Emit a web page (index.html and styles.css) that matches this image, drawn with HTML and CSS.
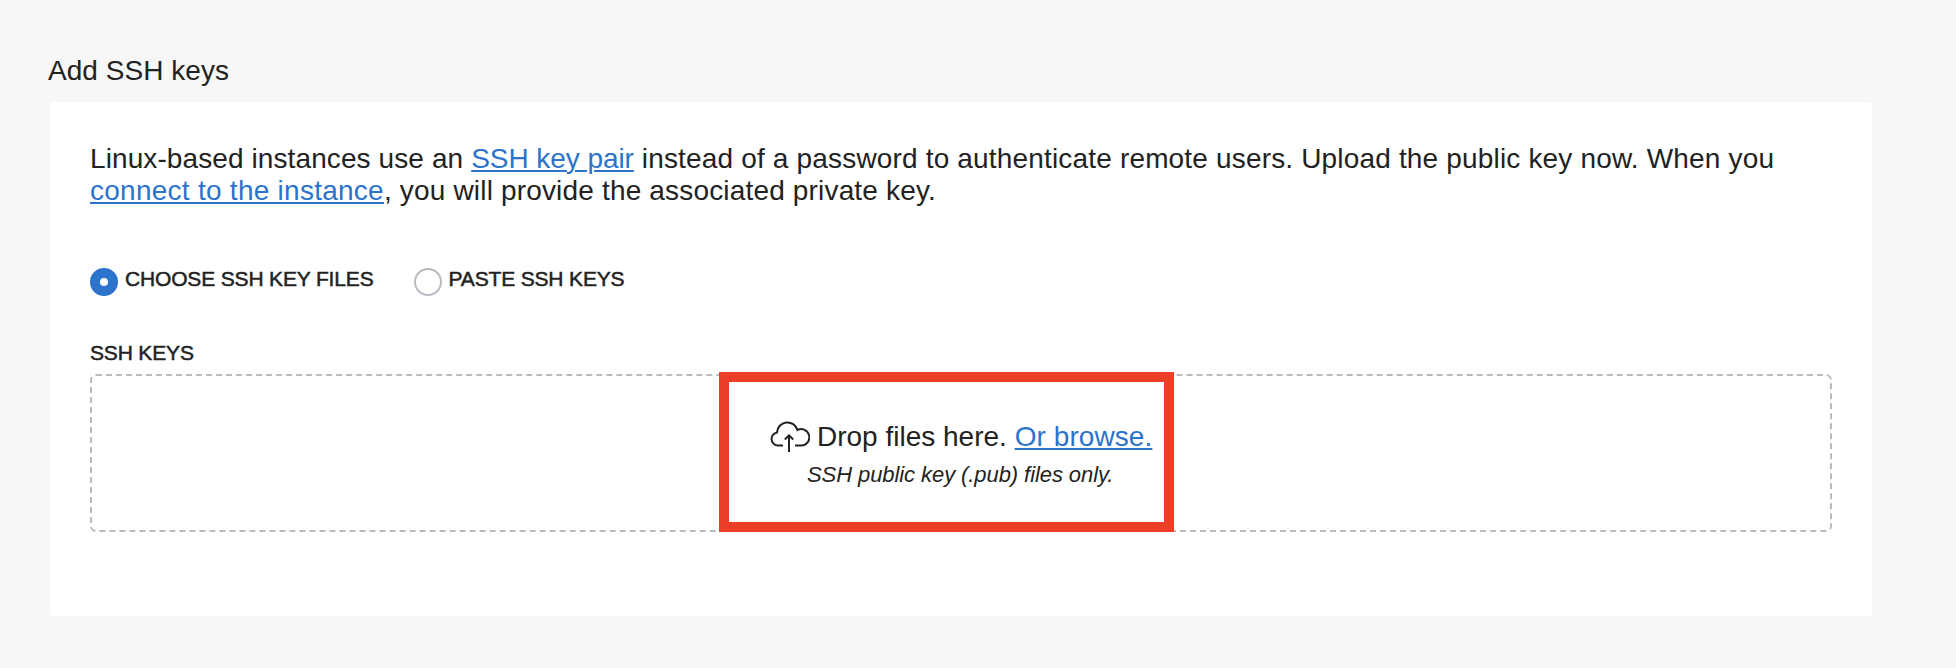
FILE: index.html
```html
<!DOCTYPE html>
<html lang="en">
<head>
<meta charset="utf-8">
<title>Add SSH keys</title>
<link rel="stylesheet" href="styles.css">
</head>
<body>
<main class="page">
  <h2 class="title">Add SSH keys</h2>
  <section class="card">
    <p class="intro"><span class="lead">Linux-based instances use an </span><a class="pair" href="#">SSH key pair</a> instead of a password to authenticate remote users. Upload the public key now. When you<br><a class="connect" href="#">connect to the instance</a>, you will provide the associated private key.</p>
    <div class="options">
      <label class="option"><span class="radio checked"></span><span class="label">CHOOSE SSH KEY FILES</span></label>
      <label class="option"><span class="radio"></span><span class="label">PASTE SSH KEYS</span></label>
    </div>
    <div class="label field">SSH KEYS</div>
    <div class="dropzone">
      <div class="drop">
        <svg class="cloud" width="40" height="32" viewBox="0 0 40 32" fill="none" stroke="#222" stroke-width="2"><path d="M13 24.500H8A6.600 6.600 0 0 1 7 11.400A10.400 10.400 0 0 1 27.400 9A8.200 8.200 0 1 1 30.800 24.500H25"/><path d="M19 31V14.500M14.800 18.500L19 14.300L23.200 18.500"/></svg>
        <span>Drop files here. <a href="#">Or browse.</a></span>
      </div>
      <div class="hint">SSH public key (.pub) files only.</div>
      <div class="highlight"></div>
    </div>
  </section>
</main>
</body>
</html>
```
FILE: styles.css
```css
body {
  margin: 0;
  background: #f7f7f7;
  color: #222;
  font: 28px/32px "Liberation Sans", Arial, sans-serif;
}
.page { height: 668px; padding: 55px 84px 0 48px; box-sizing: border-box; }
.title { margin: 0; font-size: 28px; font-weight: 400; line-height: 32px; letter-spacing: .04px; }
.card {
  height: 514px;
  margin: 15px 0 0 2px;
  padding: 41px 40px 40px;
  box-sizing: border-box;
  background: #fff;
  border-radius: 4px;
  box-shadow: 0 0 2px #f1f1f1;
}
.intro { margin: 0; white-space: nowrap; letter-spacing: .17px; }
.lead { letter-spacing: .1px; }
.pair { letter-spacing: -.06px; }
.connect { letter-spacing: .26px; }
a { color: #2c73cb; text-decoration: underline; text-decoration-thickness: 2px; text-underline-offset: 2px; }
.options { display: flex; gap: 40px; height: 28px; margin-top: 61px; }
.option { display: flex; gap: 7px; }
.option .label { margin-top: -1px; }
.radio { width: 28px; height: 28px; box-sizing: border-box; border: 2px solid #b7bac1; border-radius: 50%; }
.radio.checked { border: 10px solid #2c73cb; }
.label { font-size: 21px; line-height: 24px; letter-spacing: -.16px; -webkit-text-stroke: .5px #222; white-space: nowrap; }
.field { margin-top: 45px; }
.dropzone {
  position: relative;
  height: 158px;
  margin-top: 9px;
  padding-top: 45px;
  box-sizing: border-box;
  border: 2px dashed #b7bac1;
  border-radius: 6px;
}
.drop { display: flex; gap: 7px; margin-left: 678px; white-space: nowrap; }
.drop a { letter-spacing: .08px; }
.hint { margin: 6px 0 0 715px; font-size: 22px; font-style: italic; letter-spacing: -.08px; }
.highlight {
  position: absolute;
  left: 627px;
  top: -4px;
  width: 455px;
  height: 160px;
  box-sizing: border-box;
  border: 10px solid #eb4027;
}
```
